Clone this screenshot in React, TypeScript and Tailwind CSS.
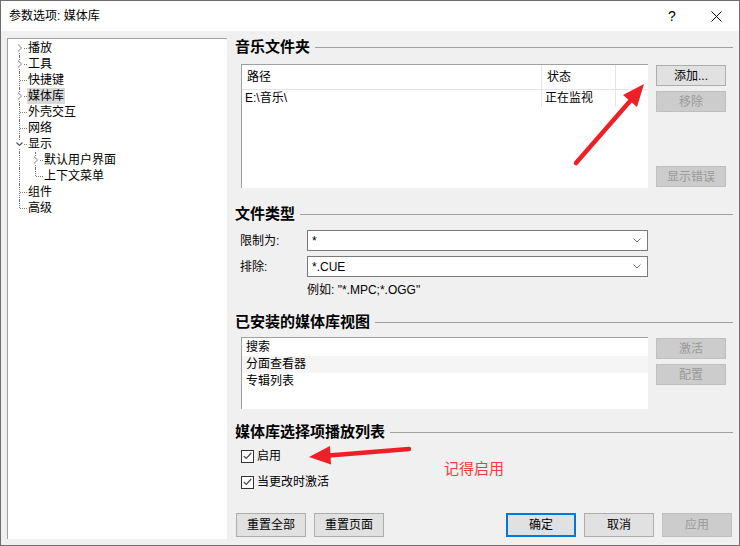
import type { ReactNode } from "react";

type TreeItem = {
  label: string;
  depth: 0 | 1;
  expander?: "closed" | "open";
  selected?: boolean;
  first?: boolean;
  last?: boolean;
};

const treeItems: TreeItem[] = [
  { label: "播放", depth: 0, expander: "closed", first: true },
  { label: "工具", depth: 0, expander: "closed" },
  { label: "快捷键", depth: 0 },
  { label: "媒体库", depth: 0, expander: "closed", selected: true },
  { label: "外壳交互", depth: 0 },
  { label: "网络", depth: 0 },
  { label: "显示", depth: 0, expander: "open" },
  { label: "默认用户界面", depth: 1, expander: "closed", first: true },
  { label: "上下文菜单", depth: 1, last: true },
  { label: "组件", depth: 0 },
  { label: "高级", depth: 0, last: true },
];

function Chevron({ open }: { open?: boolean }) {
  return (
    <svg
      width="7"
      height="8"
      viewBox="0 0 7 8"
      className="absolute left-[4px] top-[4px] bg-white"
    >
      {open ? (
        <path d="M0.5 2.5 L3.5 5.5 L6.5 2.5" fill="none" stroke="#555" strokeWidth="1.2" />
      ) : (
        <path d="M2 0.5 L5.5 4 L2 7.5" fill="none" stroke="#b0b0b0" strokeWidth="1.2" />
      )}
    </svg>
  );
}

function Connector({
  first,
  last,
  expander,
}: {
  first?: boolean;
  last?: boolean;
  expander?: "closed" | "open";
}) {
  return (
    <div className="relative h-4 w-[16px] shrink-0">
      <div
        className={`absolute left-[7px] w-0 border-l border-dotted border-[#7a7a7a] ${
          first ? "top-[8px] bottom-0" : last ? "top-0 h-[8px]" : "top-0 bottom-0"
        }`}
      />
      <div className="absolute left-[8px] top-[8px] h-0 w-[7px] border-t border-dotted border-[#7a7a7a]" />
      {expander && <Chevron open={expander === "open"} />}
    </div>
  );
}

function Tree() {
  return (
    <div className="h-[501px] w-[220px] border-l border-t border-[#a0a0a0] bg-white pl-[4px] pt-[1px]">
      {treeItems.map((item) => (
        <div key={item.label} className="flex h-4 items-center">
          {item.depth === 1 ? (
            <>
              <div className="relative h-4 w-[16px] shrink-0">
                <div className="absolute left-[7px] top-0 bottom-0 w-0 border-l border-dotted border-[#7a7a7a]" />
              </div>
              <Connector last={item.last} expander={item.expander} />
            </>
          ) : (
            <Connector first={item.first} last={item.last} expander={item.expander} />
          )}
          <span
            className={`ml-[-1px] h-4 px-[1px] text-[12px] leading-4 text-black ${
              item.selected ? "bg-[#d9d9d9]" : ""
            }`}
          >
            {item.label}
          </span>
        </div>
      ))}
    </div>
  );
}

function Section({ title }: { title: string }) {
  return (
    <div className="flex h-4 items-center">
      <span className="text-[15px] font-bold leading-4 text-black">{title}</span>
      <div className="ml-[5px] flex-1 border-t border-[#a0a0a0]" />
    </div>
  );
}

function Btn({
  children,
  disabled,
  primary,
  h = "h-[21px]",
  className = "",
}: {
  children: ReactNode;
  disabled?: boolean;
  primary?: boolean;
  h?: string;
  className?: string;
}) {
  return (
    <button
      type="button"
      className={`${h} w-[70px] shrink-0 text-[12px] leading-none ${className} ${
        disabled
          ? "border border-[#bfbfbf] bg-[#cccccc] text-[#9a9a9a]"
          : primary
          ? "border-2 border-[#0078d7] bg-[#e1e1e1] text-black"
          : "border border-[#adadad] bg-[#e1e1e1] text-black"
      }`}
    >
      {children}
    </button>
  );
}

function Combo({ label, value }: { label: string; value: string }) {
  return (
    <div className="flex h-[21px] items-center">
      <span className="w-[72px] shrink-0 pl-[5px] text-[12px] text-black">{label}</span>
      <div className="flex h-[21px] w-[341px] items-center border border-[#7a7a7a] bg-white pl-[4px] pr-[6px]">
        <span className="flex-1 text-[12px] text-black">{value}</span>
        <svg width="8" height="5" viewBox="0 0 8 5">
          <path d="M0.5 0.5 L4 4 L7.5 0.5" fill="none" stroke="#707070" strokeWidth="1" />
        </svg>
      </div>
    </div>
  );
}

function Check({ label, className = "" }: { label: string; className?: string }) {
  return (
    <div className={`flex h-4 items-center pl-[6px] ${className}`}>
      <div className="flex h-[13px] w-[13px] items-center justify-center border border-[#333333] bg-white">
        <svg width="9" height="8" viewBox="0 0 9 8">
          <path d="M0.8 4 L3.3 6.4 L8.2 1" fill="none" stroke="#4a4a4a" strokeWidth="1.3" />
        </svg>
      </div>
      <span className="ml-[3px] text-[12px] text-black">{label}</span>
    </div>
  );
}

function Annotations() {
  return (
    <>
      <svg
        width="740"
        height="546"
        viewBox="0 0 740 546"
        className="pointer-events-none absolute left-0 top-0"
      >
        <line x1="575" y1="162" x2="630" y2="99" stroke="#ee2027" strokeWidth="4.5" strokeLinecap="round" />
        <polygon points="643,83 636,106 622,94" fill="#ee2027" />
        <line x1="408" y1="448" x2="328" y2="454.5" stroke="#ee2027" strokeWidth="4.5" strokeLinecap="round" />
        <polygon points="308,456 330,463.5 329,445" fill="#ee2027" />
      </svg>
      <span className="absolute left-[443px] top-[458px] text-[15px] leading-5 text-[#ee3b3b]">
        记得启用
      </span>
    </>
  );
}

export default function App() {
  return (
    <div className="relative h-[546px] w-[740px] overflow-hidden border border-[#6d6d6d] bg-[#f0f0f0] font-['Liberation_Sans','Noto_Sans_CJK_SC',sans-serif]">
      {/* title bar */}
      <div className="flex h-[30px] items-center bg-white pl-[8px]">
        <span className="flex-1 text-[12px] text-black">参数选项: 媒体库</span>
        <span className="mr-[11px] w-[20px] text-center text-[14px] text-black">?</span>
        <div className="flex w-[46px] justify-center">
          <svg width="11" height="11" viewBox="0 0 11 11">
            <path d="M0.5 0.5 L10.5 10.5 M10.5 0.5 L0.5 10.5" stroke="#000" strokeWidth="1" />
          </svg>
        </div>
      </div>

      <div className="flex pl-[6px] pt-[7px]">
        <Tree />

        <div className="ml-[8px] flex w-[498px] flex-col pt-[1px]">
          <Section title="音乐文件夹" />
          <div className="mt-[9px] flex pl-[6px]">
            <div className="h-[124px] w-[407px] border-l border-t border-[#a0a0a0] bg-white">
              <div className="flex h-[25px] border-b border-[#e5e5e5] text-[12px] text-black">
                <div className="flex w-[300px] items-center border-r border-[#e5e5e5] pl-[5px]">路径</div>
                <div className="flex w-[74px] items-center border-r border-[#e5e5e5] pl-[5px]">状态</div>
              </div>
              <div className="flex h-[17px] text-[12px] leading-[17px] text-black">
                <div className="w-[300px] border-r border-[#e5e5e5] pl-[3px]">E:\音乐\</div>
                <div className="w-[74px] border-r border-[#e5e5e5] pl-[3px]">正在监视</div>
              </div>
            </div>
            <div className="ml-[8px] flex h-[124px] flex-col pb-[1px] pt-[1px]">
              <Btn>添加...</Btn>
              <Btn disabled className="mt-[5px]">移除</Btn>
              <Btn disabled className="mt-auto">显示错误</Btn>
            </div>
          </div>

          <div className="mt-[18px]">
            <Section title="文件类型" />
          </div>
          <div className="mt-[8px]">
            <Combo label="限制为:" value="*" />
          </div>
          <div className="mt-[5px]">
            <Combo label="排除:" value="*.CUE" />
          </div>
          <div className="mt-[5px] h-4 pl-[72px] text-[12px] leading-4 text-black">例如: "*.MPC;*.OGG"</div>

          <div className="mt-[16px]">
            <Section title="已安装的媒体库视图" />
          </div>
          <div className="mt-[7px] flex pl-[6px]">
            <div className="h-[72px] w-[407px] border-l border-t border-[#a0a0a0] bg-white pt-[1px] text-[12px] leading-[17px] text-black">
              <div className="h-[17px] pl-[4px]">搜索</div>
              <div className="h-[17px] bg-[#f5f5f5] pl-[4px]">分面查看器</div>
              <div className="h-[17px] pl-[4px]">专辑列表</div>
            </div>
            <div className="ml-[8px] flex flex-col pt-[1px]">
              <Btn disabled>激活</Btn>
              <Btn disabled className="mt-[5px]">配置</Btn>
            </div>
          </div>

          <div className="mt-[15px]">
            <Section title="媒体库选择项播放列表" />
          </div>
          <Check label="启用" className="mt-[8px]" />
          <Check label="当更改时激活" className="mt-[10px]" />

          <div className="mt-[23px] flex pl-[1px]">
            <Btn h="h-[24px]">重置全部</Btn>
            <Btn h="h-[24px]" className="ml-[8px]">重置页面</Btn>
            <Btn h="h-[24px]" primary className="ml-[122px]">确定</Btn>
            <Btn h="h-[24px]" className="ml-[8px]">取消</Btn>
            <Btn h="h-[24px]" disabled className="ml-[8px]">应用</Btn>
          </div>
        </div>
      </div>

      <Annotations />
    </div>
  );
}
